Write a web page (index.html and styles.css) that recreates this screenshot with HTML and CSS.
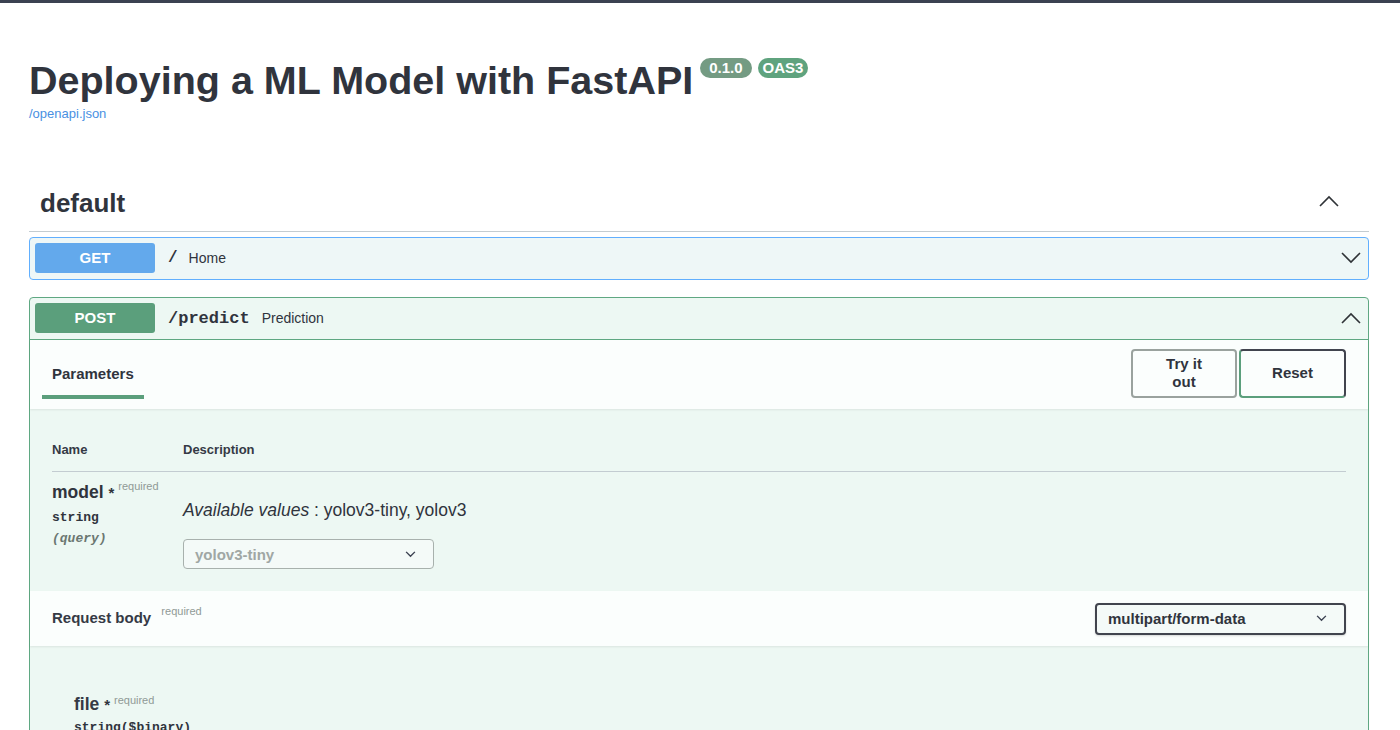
FILE: index.html
```html
<!DOCTYPE html>
<html lang="en">
<head>
<meta charset="utf-8">
<title>Deploying a ML Model with FastAPI - Swagger UI</title>
<link rel="stylesheet" href="styles.css">
</head>
<body>
<div class="topbar"></div>
<div class="wrapper">
  <div class="info">
    <div class="title-row">
      <h1 class="title">Deploying a ML Model with FastAPI</h1>
      <span class="badge badge-version">0.1.0</span>
      <span class="badge badge-oas">OAS3</span>
    </div>
    <a class="spec-link">/openapi.json</a>
  </div>

  <div class="tag-section">
    <div class="tag-header">
      <h3 class="tag-name">default</h3>
      <svg class="chev chev-tag" viewBox="0 0 20 12" width="20" height="12"><path d="M1 11 L10 2 L19 11" fill="none" stroke="#2f3337" stroke-width="1.6"/></svg>
    </div>

    <div class="opblock opblock-get">
      <div class="opblock-summary">
        <span class="method method-get">GET</span>
        <span class="path path-plain">/</span>
        <span class="summary summary-get">Home</span>
        <svg class="chev chev-op" viewBox="0 0 20 12" width="20" height="12"><path d="M1 1 L10 10 L19 1" fill="none" stroke="#2f3337" stroke-width="1.6"/></svg>
      </div>
    </div>

    <div class="opblock opblock-post">
      <div class="opblock-summary opblock-summary-open">
        <span class="method method-post">POST</span>
        <span class="path path-mono">/predict</span>
        <span class="summary">Prediction</span>
        <svg class="chev chev-op" viewBox="0 0 20 12" width="20" height="12"><path d="M1 11 L10 2 L19 11" fill="none" stroke="#2f3337" stroke-width="1.6"/></svg>
      </div>

      <div class="section-header">
        <div class="tab">Parameters</div>
        <div class="btn-group">
          <button class="btn btn-try">Try it out</button>
          <button class="btn btn-reset">Reset</button>
        </div>
      </div>

      <div class="params">
        <div class="params-head">
          <div class="col-name">Name</div>
          <div class="col-desc">Description</div>
        </div>
        <div class="param-row">
          <div class="col-name">
            <div class="param-name">model <span class="star">*</span><span class="req">required</span></div>
            <div class="param-type">string</div>
            <div class="param-in">(query)</div>
          </div>
          <div class="col-desc">
            <div class="avail"><i>Available values</i> : yolov3-tiny, yolov3</div>
            <div class="select select-model">
              <span>yolov3-tiny</span>
              <svg viewBox="0 0 12 8" width="11" height="7"><path d="M1 1 L6 6 L11 1" fill="none" stroke="#3b4151" stroke-width="1.6"/></svg>
            </div>
          </div>
        </div>
      </div>

      <div class="section-header body-header">
        <div class="body-title">Request body <span class="req">required</span></div>
        <div class="select select-ct">
          <span>multipart/form-data</span>
          <svg viewBox="0 0 12 8" width="11" height="7"><path d="M1 1 L6 6 L11 1" fill="none" stroke="#3b4151" stroke-width="1.6"/></svg>
        </div>
      </div>

      <div class="body-content">
        <div class="file-name">file <span class="star">*</span><span class="req">required</span></div>
        <div class="param-type">string($binary)</div>
      </div>
    </div>
  </div>
</div>
</body>
</html>
```

FILE: styles.css
```css
html, body {
  margin: 0;
  padding: 0;
  background: #ffffff;
  font-family: "Liberation Sans", Arial, sans-serif;
  color: #353a45;
  height: 730px;
  overflow: hidden;
}

.topbar {
  height: 3px;
  background: #3b4151;
}

.wrapper {
  padding: 0 31px 0 29px;
}

.info {
  padding-top: 54px;
}

.title-row {
  display: flex;
  align-items: flex-start;
}

.title {
  margin: 0;
  font-size: 39.5px;
  line-height: 46px;
  font-weight: 700;
  color: #30343d;
}

.badge {
  display: inline-block;
  margin-top: 1px;
  font-size: 15px;
  font-weight: 700;
  line-height: 20px;
  color: #fff;
  border-radius: 57px;
}

.badge-version {
  margin-left: 7px;
  padding: 0 9px;
  background: #749b83;
}

.badge-oas {
  margin-left: 6px;
  padding: 0 5px;
  background: #5fa37e;
}

.spec-link {
  display: block;
  margin-top: 3px;
  font-size: 13px;
  line-height: 15px;
  color: #4990e2;
}

.tag-section {
  margin-top: 59px;
}

.tag-header {
  display: flex;
  align-items: center;
  justify-content: space-between;
  padding: 8px 30px 13px 11px;
  border-bottom: 1px solid #c3ccd1;
}

.tag-name {
  margin: 0;
  font-size: 26px;
  line-height: 30px;
  font-weight: 700;
  color: #30343d;
}

.chev-tag {
  margin-top: -4px;
}

.opblock {
  border-radius: 4px;
  border: 1px solid;
}

.opblock-get {
  margin-top: 5px;
  border-color: #61affe;
  background: #eef7f7;
}

.opblock-post {
  margin-top: 17px;
  border-color: #5fa882;
  background: #edf8f3;
  height: 460px;
}

.opblock-summary {
  display: flex;
  align-items: center;
  padding: 5px 5px 6px;
}

.opblock-summary-open {
  border-bottom: 1px solid #5fa882;
}

.method {
  width: 120px;
  height: 30px;
  border-radius: 3px;
  color: #fff;
  font-size: 15px;
  font-weight: 700;
  line-height: 30px;
  text-align: center;
}

.method-get {
  background: #63a9ec;
}

.method-post {
  background: #5b9f7c;
}

.path {
  margin-left: 13px;
  color: #30343d;
}

.path-plain {
  font-size: 16px;
  font-weight: 700;
  font-family: "Liberation Mono", monospace;
}

.path-mono {
  font-size: 17px;
  font-weight: 700;
  font-family: "Liberation Mono", monospace;
}

.summary {
  margin-left: 12px;
  font-size: 14px;
  color: #30343d;
  flex: 1;
}

.summary-get {
  margin-left: 11px;
}

.chev-op {
  margin-right: 2px;
}

.section-header {
  display: flex;
  align-items: center;
  justify-content: space-between;
  height: 69px;
  box-sizing: border-box;
  padding: 0 22px 0 12px;
  background: #fbfefd;
  box-shadow: 0 1px 2px rgba(0, 0, 0, 0.08);
}

.tab {
  align-self: flex-end;
  margin-bottom: 10px;
  padding: 0 10px 12px;
  border-bottom: 4px solid #5b9f7c;
  font-size: 15px;
  font-weight: 700;
  line-height: 18px;
  color: #30343d;
}

.btn-group {
  display: flex;
  gap: 2px;
  margin-top: -2px;
}

.btn {
  box-sizing: border-box;
  width: 106px;
  height: 49px;
  padding: 4px 20px 5px;
  border-radius: 4px;
  background: transparent;
  font-family: "Liberation Sans", Arial, sans-serif;
  font-size: 15px;
  font-weight: 700;
  line-height: 18px;
  color: #30343d;
}

.btn-try {
  border: 2px solid #9aa29e;
}

.btn-reset {
  width: 107px;
  border: 2px solid #41444e;
  border-left-color: #5b9f7c;
  border-bottom-color: #5b9f7c;
}

.params {
  padding: 20px 22px 22px;
}

.params-head {
  display: flex;
  padding: 13px 0 13px;
  border-bottom: 1px solid #c3ccd1;
  font-size: 13px;
  font-weight: 700;
  line-height: 16px;
}

.col-name {
  width: 131px;
  flex: none;
}

.col-desc {
  flex: 1;
}

.param-row {
  display: flex;
  padding-top: 10px;
}

.param-name {
  font-size: 17.5px;
  font-weight: 700;
  line-height: 20px;
  color: #30343d;
}

.star {
  color: #30343d;
  font-size: 15px;
}

.req {
  position: relative;
  top: -8px;
  margin-left: 4px;
  font-size: 11px;
  font-weight: 400;
  color: #909a96;
}

.param-type {
  margin-top: 5px;
  font-family: "Liberation Mono", monospace;
  font-size: 13px;
  font-weight: 700;
  line-height: 18px;
  color: #30343d;
}

.param-in {
  margin-top: 3px;
  font-family: "Liberation Mono", monospace;
  font-size: 13px;
  font-style: italic;
  font-weight: 700;
  line-height: 18px;
  color: #6b7771;
}

.avail {
  margin-top: 18px;
  font-size: 17.5px;
  line-height: 20px;
  color: #30343d;
}

.select {
  display: flex;
  align-items: center;
  justify-content: space-between;
  box-sizing: border-box;
  width: 251px;
  border-radius: 4px;
  font-size: 15px;
  font-weight: 700;
}

.select-model {
  margin-top: 19px;
  height: 30px;
  padding: 0 17px 0 11px;
  border: 1px solid #a8b1ad;
  color: #a0a7a4;
  background: #f4faf8;
}

.body-header {
  height: 55px;
}

.body-title {
  padding-left: 10px;
  font-size: 15px;
  font-weight: 700;
  line-height: 18px;
}

.body-title .req {
  top: -8px;
  margin-left: 6px;
}

.select-ct {
  height: 32px;
  padding: 0 17px 0 11px;
  border: 2px solid #41444e;
  color: #30343d;
  background: #f4faf8;
  box-shadow: 0 1px 2px rgba(0, 0, 0, 0.15);
}

.body-content {
  padding: 48px 0 0 44px;
}

.file-name {
  font-size: 17.5px;
  font-weight: 700;
  line-height: 20px;
}

.file-name .req {
  top: -6px;
}

.body-content .param-type {
  margin-top: 3px;
}
```
